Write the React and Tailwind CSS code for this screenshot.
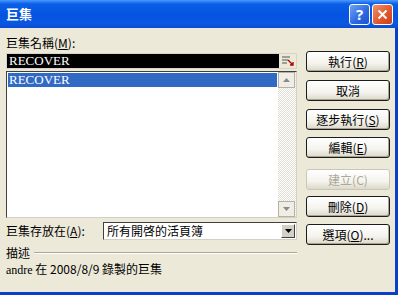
import React from 'react'

const cjk = { fontFamily: '"Noto Sans CJK TC", "Noto Sans CJK SC", sans-serif' }
const serif = { fontFamily: '"Liberation Serif", "Noto Sans CJK TC", serif' }

function Hot({ k }) {
  return (
    <span>
      (<span className="underline">{k}</span>)
    </span>
  )
}

function Boton({ children, disabled, className = '' }) {
  return (
    <div
      className={`flex h-[21px] w-[84px] items-center justify-center rounded-[3px] border border-[#1c1c1c] bg-[linear-gradient(180deg,#ffffff_0%,#f4f3ee_60%,#dcd8c8_100%)] text-[12px] leading-none shadow-[inset_-1px_-1px_0_#a8a491] ${
        disabled ? 'border-[#c9c7ba] text-[#aca899] shadow-none' : 'text-black'
      } ${className}`}
      style={cjk}
    >
      {children}
    </div>
  )
}

function Flecha({ down }) {
  return (
    <div className="flex h-[16px] w-[17px] items-center justify-center border border-[#b5b2a4] bg-[#efede4]">
      <svg width="7" height="4" viewBox="0 0 7 4">
        <path d={down ? 'M0 0h7L3.5 4z' : 'M0 4h7L3.5 0z'} fill="#8a8a8a" />
      </svg>
    </div>
  )
}

export default function App() {
  return (
    <div className="flex h-[295px] w-[398px] flex-col overflow-hidden bg-[#0a3fcb]">
      {/* barra de título */}
      <div className="flex h-[28px] shrink-0 items-center justify-between bg-[linear-gradient(180deg,#4a9bff_0%,#0b5fe6_14%,#0553e0_55%,#0a58e2_85%,#0a4ad0_100%)] pl-[6px] pr-[5px]">
        <span className="text-[13px] font-bold text-white" style={cjk}>
          巨集
        </span>
        <div className="flex gap-[2px]">
          <div className="flex h-[21px] w-[21px] items-center justify-center rounded-[3px] border border-white bg-[linear-gradient(135deg,#6fa3f7_0%,#2a68e0_60%,#1c54d0_100%)] text-[15px] font-bold leading-none text-white">
            ?
          </div>
          <div className="flex h-[21px] w-[21px] items-center justify-center rounded-[3px] border border-white bg-[linear-gradient(135deg,#f0906a_0%,#e0552a_60%,#c9401a_100%)]">
            <svg width="11" height="11" viewBox="0 0 11 11">
              <path d="M1.5 1.5l8 8M9.5 1.5l-8 8" stroke="#fff" strokeWidth="2" />
            </svg>
          </div>
        </div>
      </div>

      {/* cuerpo */}
      <div className="mb-[3px] mr-[3px] flex flex-1 bg-[#ece9d8] pl-[6px]">
        <div className="flex w-[291px] flex-col pt-[7px]">
          <div className="h-[15px] text-[12px] leading-[15px] text-black" style={cjk}>
            巨集名稱<Hot k="M" />:
          </div>
          <div className="mt-[3px] flex h-[16px] border border-[#d8d5c8] bg-black">
            <div className="flex-1 pl-[2px] text-[13px] leading-[14px] text-white" style={serif}>
              RECOVER
            </div>
            <div className="flex w-[17px] items-center justify-center bg-[#ece9d8]">
              <svg width="12" height="10" viewBox="0 0 12 10">
                <path d="M0 1h8M0 4h6M0 7h5" stroke="#555" strokeWidth="1" />
                <path d="M6 4l5 5M8 9h3V6" stroke="#a00" strokeWidth="1.3" fill="none" />
              </svg>
            </div>
          </div>
          <div className="mt-[2px] flex h-[147px] border border-t-[#404040] border-l-[#404040] border-b-[#d4d0c8] border-r-[#d4d0c8] bg-white">
            <div className="flex-1 p-[1px]">
              <div className="h-[14px] bg-[#316ac5] pl-[1px] text-[13px] leading-[14px] text-white" style={serif}>
                RECOVER
              </div>
            </div>
            <div className="flex w-[18px] flex-col bg-[repeating-conic-gradient(#e2dfd4_0_25%,#ffffff_0_50%)] bg-[length:2px_2px]">
              <Flecha />
              <div className="flex-1" />
              <Flecha down />
            </div>
          </div>
          <div className="mt-[4px] flex h-[18px] items-center">
            <div className="w-[97px] text-[12px] leading-none text-black" style={cjk}>
              巨集存放在<Hot k="A" />:
            </div>
            <div className="flex h-[18px] flex-1 border border-t-[#404040] border-l-[#404040] border-b-[#d4d0c8] border-r-[#d4d0c8] bg-white">
              <div className="flex-1 pl-[3px] text-[12px] leading-[16px] text-black" style={cjk}>
                所有開啓的活頁簿
              </div>
              <div className="m-[1px] flex w-[14px] items-center justify-center border border-t-white border-l-white border-b-[#404040] border-r-[#404040] bg-[#d4d0c8]">
                <svg width="7" height="4" viewBox="0 0 7 4">
                  <path d="M0 0h7L3.5 4z" fill="#000" />
                </svg>
              </div>
            </div>
          </div>
          <div className="mt-[6px] flex h-[14px] items-center gap-[4px]">
            <span className="text-[12px] leading-none text-black" style={cjk}>
              描述
            </span>
            <div className="h-[2px] flex-1 border-t border-b border-t-[#aca899] border-b-white" />
          </div>
          <div className="mt-[2px] h-[14px] text-[12px] leading-[14px] text-black" style={cjk}>
            <span style={serif}>andre</span> 在 2008/8/9 錄製的巨集
          </div>
        </div>

        <div className="ml-[9px] flex flex-col pt-[23px]">
          <Boton>
            執行<Hot k="R" />
          </Boton>
          <Boton className="mt-[8px]">取消</Boton>
          <Boton className="mt-[8px]">
            逐步執行<Hot k="S" />
          </Boton>
          <Boton className="mt-[7px]">
            編輯<Hot k="E" />
          </Boton>
          <Boton disabled className="mt-[11px]">
            建立(C)
          </Boton>
          <Boton className="mt-[6px]">
            刪除<Hot k="D" />
          </Boton>
          <Boton className="mt-[7px]">
            選項<Hot k="O" />...
          </Boton>
        </div>
      </div>
    </div>
  )
}
